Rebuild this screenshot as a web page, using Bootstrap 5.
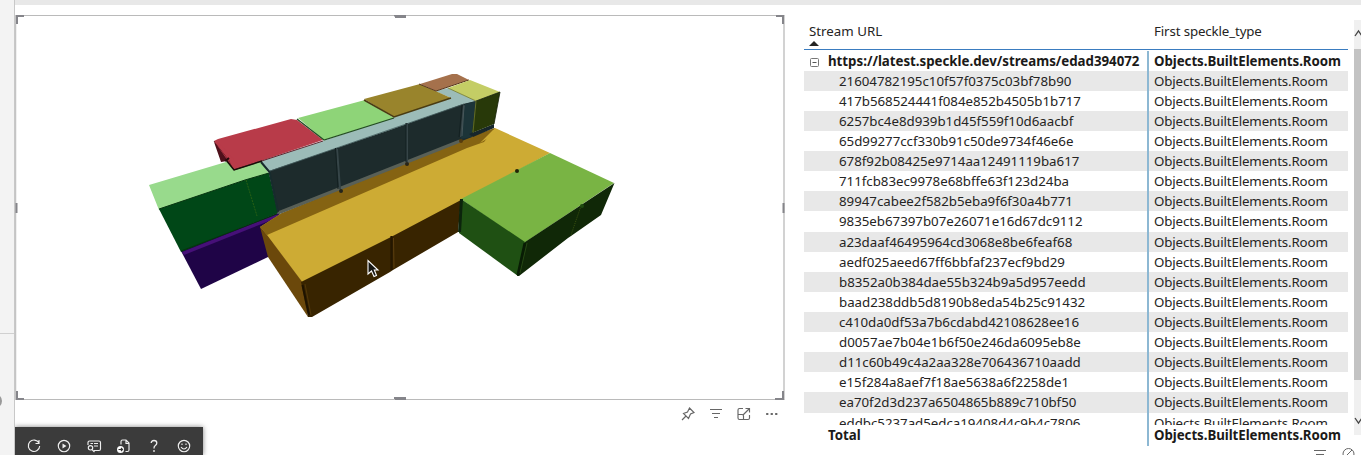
<!DOCTYPE html>
<html lang="en">
<head>
<meta charset="utf-8">
<title>Speckle report</title>
<link href="https://cdn.jsdelivr.net/npm/bootstrap@5.3.0/dist/css/bootstrap.min.css" rel="stylesheet">
<style>
body{font-family:"Noto Sans","Open Sans",sans-serif;font-size:13.3px;line-height:20px;color:#252423;background:#fff;height:455px}
.pane-edge{width:15px;background:#f3f3f3;border-right:1px solid #c8c8c8}
.pane-rule{top:333px;height:1px;background:#d0d0d0}
.pane-dot{left:-12px;top:394px;width:14px;height:14px;border:3px solid #999;border-radius:50%}
.top-band{height:5px;background:#e8e8e8}
.stage{width:789px}
.viewer{width:770px;height:385px;margin-top:10px}
.viewer svg{display:block}
.visual-tools{height:27px;padding-right:24px;gap:12px}
.toolbar-dark{width:188px;height:28px;background:#3b3b3b;box-shadow:0 0 5px rgba(0,0,0,.5);padding:11px 0 0 11px;gap:14px}
.toolbar-dark svg,.visual-tools svg{width:16px;height:16px;flex:none;fill:none;stroke-width:1.15}
.toolbar-dark svg{stroke:#eee}
.visual-tools svg{stroke:#666}
.matrix{width:544px;padding-top:15px}
.m-row{display:grid;grid-template-columns:345px 199px;height:20.12px;white-space:nowrap}
.m-head{height:30px;padding-top:1px;border-bottom:1px solid #3a7cc0}
.m-name{padding-left:35px;border-right:2px solid #8db8d3;letter-spacing:-.02px;line-height:21px}
.m-type{padding-left:5px;letter-spacing:-.13px;line-height:21px}
.m-head .m-type{line-height:20px}
.m-rows{height:374.5px;padding-top:.6px;overflow:hidden}
.m-rows .m-row:nth-child(even){background:#e8e8e8}
.m-strong{font-weight:700;color:#1b1a19}
.m-strong .m-name{padding-left:6px}
.m-strong .m-name span{margin-left:9px}
.m-strong .m-type{letter-spacing:-.06px}
.sbar{width:7px;margin-left:6px;margin-top:15px;height:415px;background:#f0f0f0}
.sbar i{display:block;height:331px;background:#c3c3c3}
.sbar svg{display:block}
.foot-tools{margin-right:-7px}
</style>
<script src="https://cdn.jsdelivr.net/npm/bootstrap@5.3.0/dist/js/bootstrap.bundle.min.js"></script>
</head>
<body class="d-flex overflow-hidden">
<aside class="pane-edge position-relative flex-shrink-0 overflow-hidden">
<div class="pane-rule position-absolute w-100"></div><div class="pane-dot position-absolute"></div>
</aside>
<main class="flex-grow-1 overflow-hidden">
<div class="top-band"></div>
<div class="d-flex">
<section class="stage flex-shrink-0">
<div class="viewer">
<svg width="770" height="385" viewBox="15 15 770 385">
<path d="M15 15.5H784.5M15 399.5H784.5" fill="none" stroke="#bababa"/><path d="M15.5 15V400M784 15V400" stroke="#c4c4c4" stroke-width="1.5"/>
<g fill="none" stroke="#85858a" stroke-width="2">
<path d="M24 16H17V24M776 16H783V24M24 399H17V391M775 399H783V391M394 15.500H406M395 17H406M394 398H406M395 399.500H406M16.500 203V213M783.500 203V213"/>
</g>
<!-- purple room -->
<path d="M181 251L277 213 282 216 268 257 201 289Z" fill="#1f0447"/>
<path d="M182 252L277 214 279 217 184 255Z" fill="#461078"/>
<path d="M260 228L282 213 270 250Z" fill="#160638"/>
<!-- large amber room -->
<path d="M260 227L282 213 472 137 495 128 550 153 461 201 303 284 267 236Z" fill="#cdab34"/>
<path d="M260 227L282 213 460 140 495 128 484 142 467 148 267 235Z" fill="#856312"/>
<path d="M493 130L497 129 498 132 480 143Z" fill="#cdab34"/>
<path d="M260 227L267 235 303 283 308 317 268 257Z" fill="#6b480b"/>
<path d="M301 282L391 237 461 200 458 232 393 270 390 272 312 317 308 317Z" fill="#382400"/>
<path d="M302.500 285L309 315" stroke="#1e1300" stroke-width="2"/><path d="M305 284L311 315" stroke="#6a4a12" stroke-width=".5"/>
<path d="M391.500 236V270" stroke="#241700" stroke-width="2.200"/><path d="M393.500 238L394 268" stroke="#5c3f10"/>
<!-- right green room -->
<path d="M461 199L550 153 614 183 524 243Z" fill="#79b444"/>
<path d="M461 199L525 242 518 276 459 233Z" fill="#1f5013"/>
<path d="M525 242L614.500 183 601 215 571 236 568 238 519 276 517 276Z" fill="#102807"/>
<path d="M461.500 199L459.500 232" stroke="#0c240c" stroke-width="3"/><path d="M525 243L518 275" stroke="#081c04" stroke-width="3"/><path d="M527 243L520 273" stroke="#37601f" stroke-width=".6"/>
<path d="M581 206L571 235" stroke="#3b5210" stroke-dasharray="1 1"/><circle cx="582" cy="206" r="2" fill="#1f4a10"/><circle cx="517" cy="171" r="2" fill="#202407"/>
<!-- left green room -->
<path d="M149 185L226 162 262 162 269 174 245 180 159 210Z" fill="#98da8c"/>
<path d="M159 209L245 180 269 173 278 213 181 252Z" fill="#004717"/>
<path d="M159 209L245 180 269 173M181 251L277 214" fill="none" stroke="#06330f"/><path d="M246 180L257 216" stroke="#326614" stroke-width=".8" stroke-dasharray="2 1"/>
<!-- long teal room -->
<path d="M260 161L323 141 394 117 451 98 435 91 448 88 476 101 464 105 270 172Z" fill="#9cbcb8"/>
<path d="M269 171L390 130 463 104 476 101 472 137 278 214Z" fill="#1d2b2c"/>
<path d="M278 213L460 141" stroke="#596057" stroke-width="3"/>
<path d="M261 162L269.500 172 278 212" fill="none" stroke="#172b2d" stroke-width="2"/>
<path d="M270 171L464 104" stroke="#435b5c" stroke-width=".8"/>
<path d="M337 149L340 189M407 123V162M464 105L461 137" stroke="#364548" stroke-width="2"/><path d="M335.500 148L338 189M406 123V162M462 105L459 137" stroke="#132021"/>
<path d="M465 104L476 101 472 137 461 139Z" fill="#1c3438"/><path d="M464 106L462 136" stroke="#465659"/>
<circle cx="341" cy="191" r="2" fill="#24241b"/><circle cx="407" cy="164" r="2" fill="#292519"/><circle cx="461" cy="141" r="2" fill="#563b0d"/>
<!-- back row of rooms -->
<path d="M214 142L221 162 227 161 234 170 225 149Z" fill="#4e101b"/>
<path d="M214 141L218 139 291 119 297 120 323 140 234 170 228 161Z" fill="#b83b49"/>
<path d="M214 141L229 160 234 170 323 141" fill="none" stroke="#561520" stroke-width=".9"/>
<path d="M214 141L229 160 233 169 240 167 222 146Z" fill="#b83b49"/>
<path d="M226 160L234 170 262 161" fill="none" stroke="#171009" stroke-width="1.500"/><path d="M225 161L229 158" stroke="#230b0c" stroke-width="2"/>
<path d="M298 118L365 100 394 118 324 140Z" fill="#8ed478"/><path d="M297 119L324 140 394 118" fill="none" stroke="#234b22" stroke-width="1.300"/>
<path d="M364 99L420 84 451 98 394 117Z" fill="#99842c"/><path d="M364 100L394 117 451 98" fill="none" stroke="#493b12" stroke-width="1.500"/>
<path d="M420 84L452 74 457 74 469 80 436 91Z" fill="#a5714c"/><path d="M419 84L436 91 469 80" fill="none" stroke="#593820"/>
<path d="M469 134L494 124 494 128 473 137Z" fill="#17262b"/>
<path d="M448 88L470 80 500 92 476 101Z" fill="#c4cd65"/><path d="M476 101L500 92 494 124 472 133Z" fill="#283909"/>
<path d="M476 101L500 92 494 124" fill="none" stroke="#142005" stroke-width=".8"/><path d="M448 88L476 101 473 132" fill="none" stroke="#6d752a" stroke-width=".8"/>
<path d="M368 260.500V274L371.500 271 374 276.500 376.500 275.500 374.300 270H378Z" fill="#171714" stroke="#fff" stroke-width="1.100"/>
</svg>
</div>
<div class="visual-tools d-flex justify-content-end align-items-center">
<svg viewBox="0 0 16 16"><path d="M9.500 2L14 6.500 10.500 8 8.500 12.500 3.500 7.500 7.500 6ZM6 10L2 14"/></svg>
<svg viewBox="0 0 16 16"><path d="M2 3.500H14M4 7.500H12M6 11.500H10"/></svg>
<svg viewBox="0 0 16 16"><path d="M7 2.500H3.500Q2 2.500 2 4V12Q2 13.500 3.500 13.500H12Q13.500 13.500 13.500 12V9M2 8.500H6Q7.500 8.500 7.500 10V13.500M7 9L13.500 2.500M9.500 2.500H13.500V6.500"/></svg>
<svg viewBox="0 0 16 16"><g fill="#666" stroke="none"><rect x="2" y="7" width="2.500" height="2" rx=".8"/><rect x="6.500" y="7" width="2.500" height="2" rx=".8"/><rect x="11" y="7" width="2.500" height="2" rx=".8"/></g></svg>
</div>
<div class="toolbar-dark d-flex">
<svg viewBox="0 0 16 16"><path d="M13 5A5.700 5.700 0 1 0 13.700 8M13 2V5.500H9.500"/></svg>
<svg viewBox="0 0 16 16"><circle cx="8" cy="8" r="5.700"/><path d="M6.500 5.500L10.500 8 6.500 10.500Z" fill="#eee" stroke="none"/></svg>
<svg viewBox="0 0 16 16"><path d="M2 7V4.500Q2 3 3.500 3H13Q14.500 3 14.500 4.500V11Q14.500 12.500 13 12.500H8M4.500 5.500H7M8 5.500H12M8 8H12"/><circle cx="4.500" cy="9.800" r="2.200"/><path d="M6 11.500L8.500 14"/></svg>
<svg viewBox="0 0 16 16"><path d="M5 6.500V3.500Q5 2 6.500 2H10L13 5V12Q13 13.500 11.500 13.500H9.500M10 2V5.500H13"/><circle cx="4.500" cy="11.500" r="3.500" fill="#fff" stroke="none"/><path d="M2.500 11.500H6.500M5 10L6.500 11.500 5 13" stroke="#333"/></svg>
<svg viewBox="0 0 16 16"><path d="M5.200 5Q5.200 2.500 8 2.500T10.800 5Q10.800 6.500 9.300 7.500T8 10.500M8 12V14" stroke-width="1.300"/></svg>
<svg viewBox="0 0 16 16"><circle cx="8" cy="8" r="5.700"/><path d="M5 9Q8 13 11 9M6 5.500V7M10 5.500V7"/></svg>
</div>
</section>
<section class="matrix flex-shrink-0">
<div class="m-row m-head"><div class="position-relative" style="padding-left:5px">Stream URL<svg class="position-absolute" style="left:5px;top:20px" width="10" height="5"><path d="M0 5L5 0 10 5Z" fill="#252423"/></svg></div><div class="m-type">First speckle_type</div></div>
<div class="m-rows" id="rows">
<div class="m-row m-strong"><div class="m-name d-flex"><svg class="flex-shrink-0" width="9" height="21" viewBox="-3.500 0 9 21"><rect x="-3" y="7.500" width="8" height="8" rx="1" fill="none" stroke="#777"/><path d="M-1 11.500H3" stroke="#555"/></svg><span>https://latest.speckle.dev/streams/edad394072</span></div><div class="m-type">Objects.BuiltElements.Room</div></div>
</div>
<div class="m-row m-strong"><div class="m-name" style="padding-left:24px">Total</div><div class="m-type">Objects.BuiltElements.Room</div></div>
<div class="foot-tools d-flex justify-content-end gap-3"><svg width="12" height="12" viewBox="0 0 12 12"><path d="M0 5.500H12M2 9.500H10" stroke="#666"/></svg><svg width="13" height="13" viewBox="0 0 13 13"><circle cx="6.500" cy="9" r="5.500" fill="none" stroke="#666"/><path d="M5 10L10 5" stroke="#666"/></svg></div>
</section>
<div class="sbar flex-shrink-0 overflow-hidden">
<svg width="7" height="29"><path d="M1 16L4.500 11 8 16" fill="none" stroke="#444" stroke-width="1.300"/></svg><i></i>
<svg width="7" height="54"><path d="M1 38L4.500 43 8 38" fill="none" stroke="#444" stroke-width="1.300"/></svg>
</div>
</div>
</main>
<script>
const streams=["21604782195c10f57f0375c03bf78b90","417b568524441f084e852b4505b1b717","6257bc4e8d939b1d45f559f10d6aacbf","65d99277ccf330b91c50de9734f46e6e","678f92b08425e9714aa12491119ba617","711fcb83ec9978e68bffe63f123d24ba","89947cabee2f582b5eba9f6f30a4b771","9835eb67397b07e26071e16d67dc9112","a23daaf46495964cd3068e8be6feaf68","aedf025aeed67ff6bbfaf237ecf9bd29","b8352a0b384dae55b324b9a5d957eedd","baad238ddb5d8190b8eda54b25c91432","c410da0df53a7b6cdabd42108628ee16","d0057ae7b04e1b6f50e246da6095eb8e","d11c60b49c4a2aa328e706436710aadd","e15f284a8aef7f18ae5638a6f2258de1","ea70f2d3d237a6504865b889c710bf50","eddbc5237ad5edca19408d4c9b4c7806"];
document.getElementById("rows").insertAdjacentHTML("beforeend",streams.map(s=>`<div class="m-row"><div class="m-name">${s}</div><div class="m-type">Objects.BuiltElements.Room</div></div>`).join(""));
</script>
</body>
</html>
